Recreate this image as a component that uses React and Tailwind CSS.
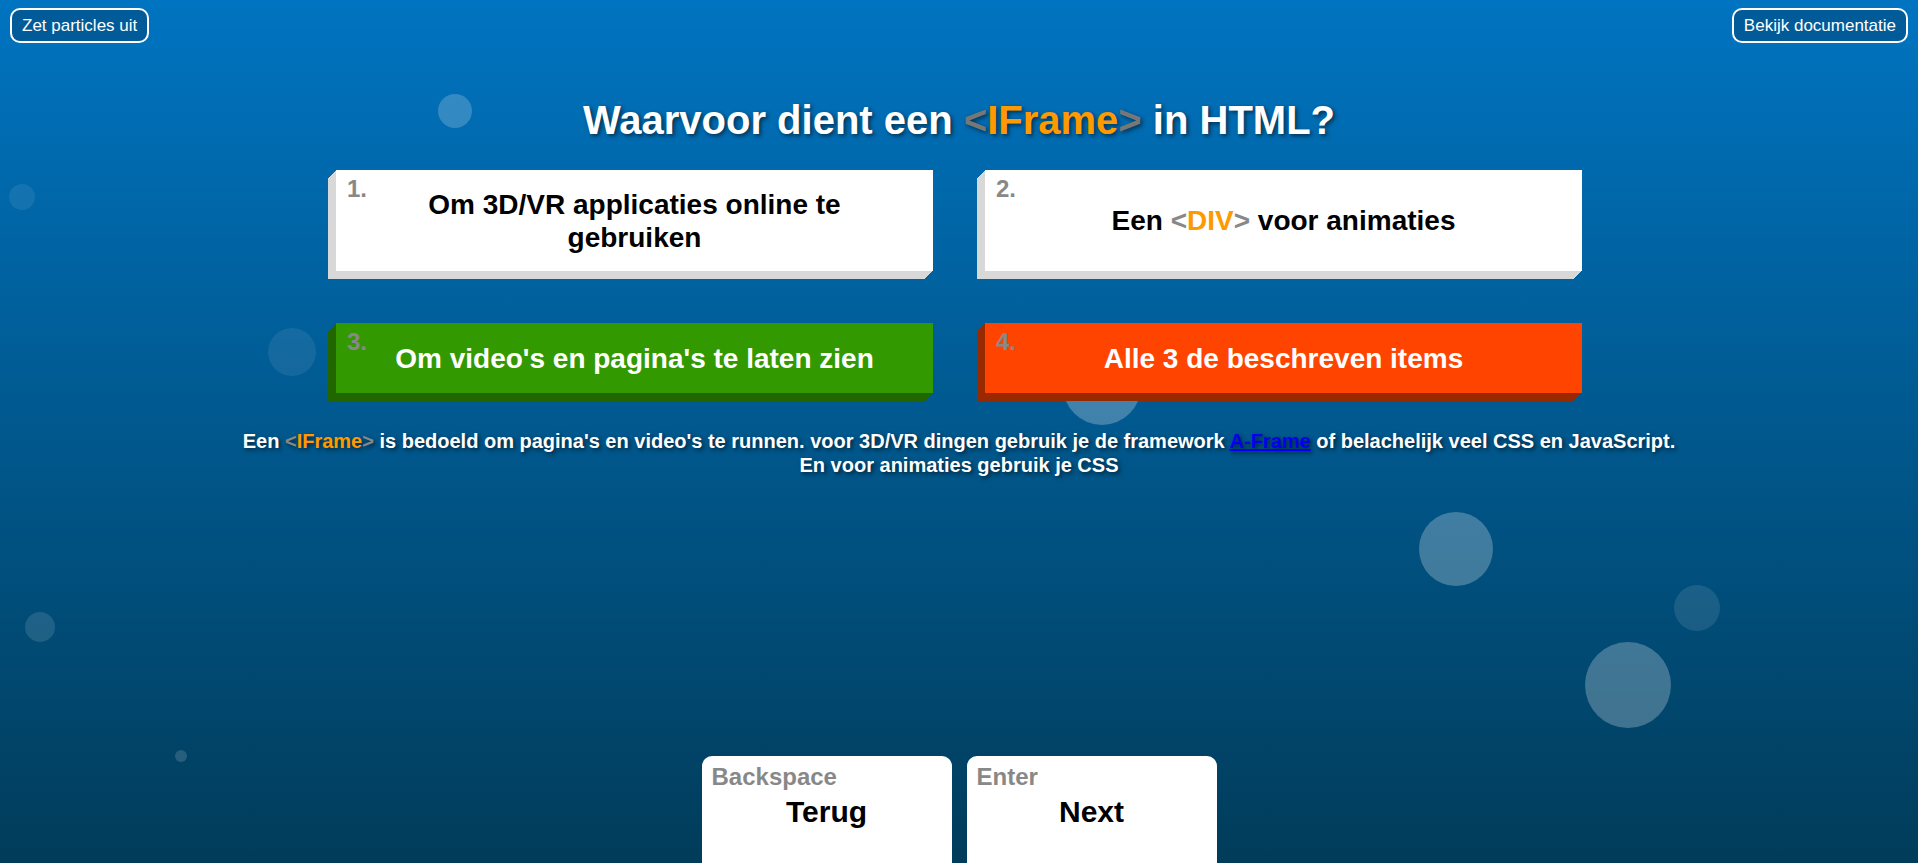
import React from "react";

const particles = [
  { x: 455, y: 111, r: 17, a: 0.2 },
  { x: 22, y: 197, r: 13, a: 0.08 },
  { x: 292, y: 352, r: 24, a: 0.08 },
  { x: 40, y: 627, r: 15, a: 0.12 },
  { x: 181, y: 756, r: 6, a: 0.15 },
  { x: 1456, y: 549, r: 37, a: 0.25 },
  { x: 1697, y: 608, r: 23, a: 0.1 },
  { x: 1628, y: 685, r: 43, a: 0.25 },
  { x: 1102, y: 386, r: 39, a: 0.25 },
];

function Lt() {
  return <span className="text-[#888888]">&lt;</span>;
}
function Gt() {
  return <span className="text-[#888888]">&gt;</span>;
}

function Card({ num, tone, children }) {
  const tones = {
    white:
      "h-[101px] bg-white text-black shadow-[-1px_1px_0_#d8d8d8,-2px_2px_0_#d8d8d8,-3px_3px_0_#d8d8d8,-4px_4px_0_#d8d8d8,-5px_5px_0_#d8d8d8,-6px_6px_0_#d8d8d8,-7px_7px_0_#d8d8d8,-8px_8px_0_#d8d8d8]",
    green:
      "h-[70px] bg-[#339900] text-white shadow-[-1px_1px_0_#226600,-2px_2px_0_#226600,-3px_3px_0_#226600,-4px_4px_0_#226600,-5px_5px_0_#226600,-6px_6px_0_#226600,-7px_7px_0_#226600,-8px_8px_0_#226600]",
    orange:
      "h-[70px] bg-[#ff4400] text-white shadow-[-1px_1px_0_#992900,-2px_2px_0_#992900,-3px_3px_0_#992900,-4px_4px_0_#992900,-5px_5px_0_#992900,-6px_6px_0_#992900,-7px_7px_0_#992900,-8px_8px_0_#992900]",
  };
  return (
    <div
      className={`relative flex items-center justify-center px-[30px] text-center text-[28px] font-bold leading-[33px] ${tones[tone]}`}
    >
      <span className="absolute left-[11px] top-[5px] text-[24px] font-bold leading-[28px] text-[#888888]">
        {num}.
      </span>
      <span>{children}</span>
    </div>
  );
}

export default function App() {
  return (
    <div className="relative flex h-[863px] w-full flex-col overflow-hidden bg-[linear-gradient(to_bottom,#0074c1,#013c5a)] font-['Liberation_Sans',Arial,sans-serif]">
      {particles.map((p, i) => (
        <div
          key={i}
          className="pointer-events-none absolute rounded-full bg-white"
          style={{
            left: p.x - p.r,
            top: p.y - p.r,
            width: p.r * 2,
            height: p.r * 2,
            opacity: p.a,
          }}
        />
      ))}

      <div className="relative flex justify-between px-[10px] pt-[8px]">
        <button className="rounded-[10px] border-2 border-white bg-[#005b98] px-[10px] py-[6px] text-[17px] leading-[19px] text-white">
          Zet particles uit
        </button>
        <button className="rounded-[10px] border-2 border-white bg-[#005b98] px-[10px] py-[6px] text-[17px] leading-[19px] text-white">
          Bekijk documentatie
        </button>
      </div>

      <h1 className="relative mt-[54px] text-center text-[40px] font-bold leading-[46px] text-white [text-shadow:2px_2px_4px_rgba(0,0,0,0.55)]">
        Waarvoor dient een <span className="text-[#777777]">&lt;</span>
        <span className="text-[#ff9900]">IFrame</span>
        <span className="text-[#777777]">&gt;</span> in HTML?
      </h1>

      <div className="relative mt-[27px] grid grid-cols-[597px_597px] justify-center gap-[52px]">
        <Card num={1} tone="white">
          Om 3D/VR applicaties online te gebruiken
        </Card>
        <Card num={2} tone="white">
          Een <Lt />
          <span className="text-[#ff9900]">DIV</span>
          <Gt /> voor animaties
        </Card>
        <Card num={3} tone="green">
          Om video's en pagina's te laten zien
        </Card>
        <Card num={4} tone="orange">
          Alle 3 de beschreven items
        </Card>
      </div>

      <p className="relative mt-[36px] text-center text-[20px] font-bold leading-[24px] text-white [text-shadow:2px_2px_4px_rgba(0,0,0,0.6)]">
        Een <Lt />
        <span className="text-[#ff9900]">IFrame</span>
        <Gt /> is bedoeld om pagina's en video's te runnen. voor 3D/VR dingen
        gebruik je de framework{" "}
        <a href="#" className="text-[#0000ee] underline">
          A-Frame
        </a>{" "}
        of belachelijk veel CSS en JavaScript.
        <br />
        En voor animaties gebruik je CSS
      </p>

      <div className="relative mt-auto flex justify-center gap-[15px]">
        <div className="flex h-[107px] w-[250px] flex-col rounded-t-[10px] bg-white">
          <div className="pl-[10px] pt-[7px] text-left text-[24px] font-bold leading-[28px] text-[#888888]">
            Backspace
          </div>
          <div className="mt-[4px] text-center text-[30px] font-bold leading-[34px] text-black">
            Terug
          </div>
        </div>
        <div className="flex h-[107px] w-[250px] flex-col rounded-t-[10px] bg-white">
          <div className="pl-[10px] pt-[7px] text-left text-[24px] font-bold leading-[28px] text-[#888888]">
            Enter
          </div>
          <div className="mt-[4px] text-center text-[30px] font-bold leading-[34px] text-black">
            Next
          </div>
        </div>
      </div>
    </div>
  );
}
